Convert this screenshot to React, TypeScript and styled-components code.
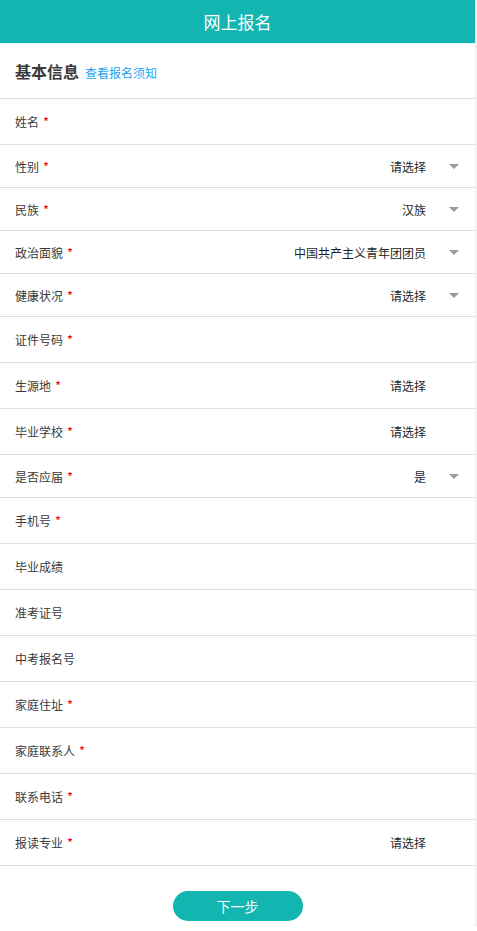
import * as React from "react";
import styled, { createGlobalStyle } from "styled-components";

const Colors = {
  teal: "#13b5b1",
  border: "#dedede",
  label: "#3a3a3a",
  value: "#1f1f1f",
  link: "#1aa3f0",
  red: "#f00000",
  arrow: "#9a9a9a",
};

const GlobalStyle = createGlobalStyle`
  html, body {
    margin: 0;
    padding: 0;
    background: #fff;
  }
  body {
    font-family: "Noto Sans CJK SC", "Noto Sans", sans-serif;
  }
`;

const Page = styled.div`
  width: 475px;
  min-height: 927px;
  background: #fff;
  border-right: 2px solid #f2f2f2;
`;

const Header = styled.header`
  height: 43px;
  background: ${Colors.teal};
  color: #fff;
  font-size: 17px;
  display: flex;
  align-items: center;
  justify-content: center;
  border-bottom: 1px solid #e8f6f6;
`;

const SectionTitle = styled.div`
  height: 54px;
  display: flex;
  align-items: center;
  padding-left: 15px;
  gap: 6px;
  border-bottom: 1px solid ${Colors.border};

  h2 {
    margin: 0;
    font-size: 16px;
    font-weight: 700;
    color: #3a3a3a;
  }

  a {
    font-size: 12px;
    color: ${Colors.link};
    text-decoration: none;
    padding-top: 2px;
  }
`;

const Row = styled.div<{ $select?: boolean }>`
  height: ${(p) => (p.$select ? 42 : 45)}px;
  display: flex;
  align-items: center;
  padding: 0 16px 0 15px;
  border-bottom: 1px solid ${Colors.border};
  font-size: 12px;
`;

const Label = styled.span`
  color: ${Colors.label};
  flex: 1;
`;

const Star = styled.span`
  color: ${Colors.red};
  margin-left: 4px;
  font-size: 13px;
`;

const Value = styled.span`
  color: ${Colors.value};
`;

const ArrowSlot = styled.span`
  width: 11px;
  margin-left: 22px;
  display: flex;
  justify-content: center;
`;

const Arrow = styled.span`
  width: 0;
  height: 0;
  border-left: 5px solid transparent;
  border-right: 5px solid transparent;
  border-top: 5px solid ${Colors.arrow};
`;

const Footer = styled.div`
  display: flex;
  justify-content: center;
  padding-top: 25px;
`;

const NextButton = styled.button`
  width: 130px;
  height: 30px;
  border: none;
  border-radius: 15px;
  background: ${Colors.teal};
  color: #fff;
  font-family: inherit;
  font-size: 14px;
  cursor: pointer;
`;

type Field = {
  label: string;
  required?: boolean;
  value?: string;
  arrow?: boolean;
};

const fields: Field[] = [
  { label: "姓名", required: true },
  { label: "性别", required: true, value: "请选择", arrow: true },
  { label: "民族", required: true, value: "汉族", arrow: true },
  { label: "政治面貌", required: true, value: "中国共产主义青年团团员", arrow: true },
  { label: "健康状况", required: true, value: "请选择", arrow: true },
  { label: "证件号码", required: true },
  { label: "生源地", required: true, value: "请选择" },
  { label: "毕业学校", required: true, value: "请选择" },
  { label: "是否应届", required: true, value: "是", arrow: true },
  { label: "手机号", required: true },
  { label: "毕业成绩" },
  { label: "准考证号" },
  { label: "中考报名号" },
  { label: "家庭住址", required: true },
  { label: "家庭联系人", required: true },
  { label: "联系电话", required: true },
  { label: "报读专业", required: true, value: "请选择" },
];

const App = () => (
  <>
    <GlobalStyle />
    <Page>
      <Header>网上报名</Header>
      <SectionTitle>
        <h2>基本信息</h2>
        <a href="#">查看报名须知</a>
      </SectionTitle>
      {fields.map((f) => (
        <Row key={f.label} $select={f.arrow}>
          <Label>
            {f.label}
            {f.required && <Star>*</Star>}
          </Label>
          {f.value && (
            <>
              <Value>{f.value}</Value>
              <ArrowSlot>{f.arrow && <Arrow />}</ArrowSlot>
            </>
          )}
        </Row>
      ))}
      <Footer>
        <NextButton>下一步</NextButton>
      </Footer>
    </Page>
  </>
);

export default App;
